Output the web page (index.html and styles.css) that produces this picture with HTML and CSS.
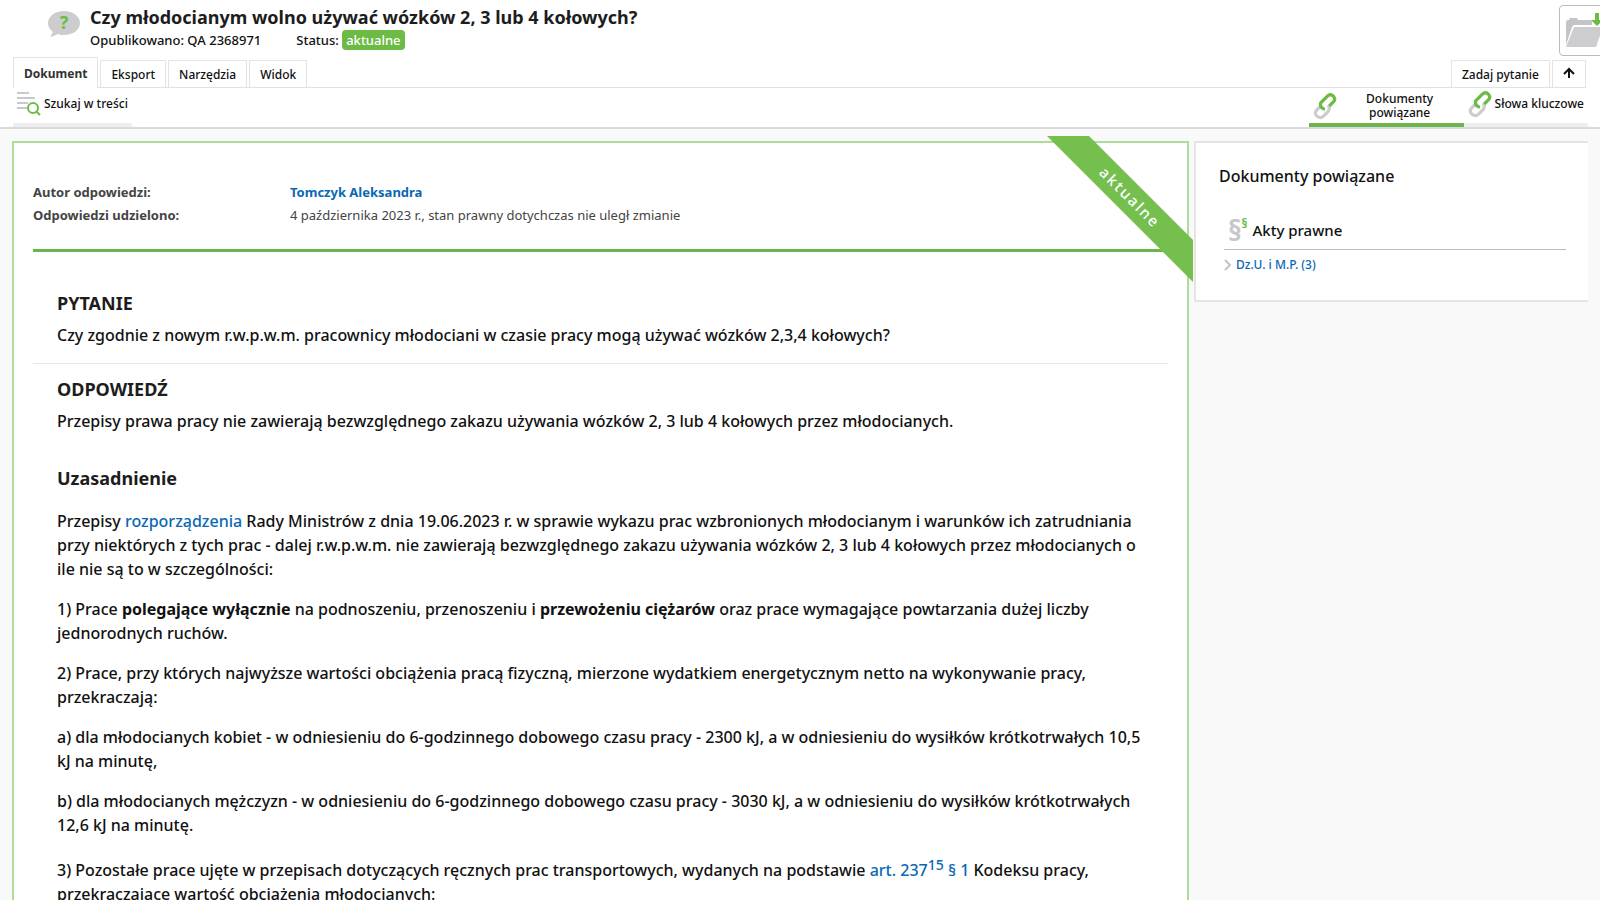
FILE: index.html
```html
<!DOCTYPE html>
<html lang="pl">
<head>
  <meta charset="utf-8">
  <title>Czy młodocianym wolno używać wózków 2, 3 lub 4 kołowych?</title>
  <link rel="stylesheet" href="styles.css">
</head>
<body>
  <!-- Nagłówek dokumentu -->
  <header class="header">
    <svg class="header-icon" width="32" height="26" viewBox="0 0 32 26">
      <path d="M16 0C7 0 0 5 0 12c0 4 2 7 5 9-1 2-2 3-3 5 4-1 6-2 8-3 2 1 4 1 6 1 9 0 16-5 16-12S25 0 16 0z" fill="#cdcdcf"/>
      <text x="16" y="18" text-anchor="middle" class="icon-mark">?</text>
    </svg>
    <div class="header-text">
      <h1>Czy młodocianym wolno używać wózków 2, 3 lub 4 kołowych?</h1>
      <p class="meta"><span>Opublikowano: QA 2368971</span><span>Status: <span class="badge">aktualne</span></span></p>
    </div>
    <button class="folder" type="button" aria-label="Dodaj do teczki">
      <svg width="48" height="40" viewBox="0 0 48 40">
        <path d="M1 33V10q0-2 2-2h1l1-2h7l1 2h12q2 0 2 2v3H10q-2 0-3 2z" fill="#c4c4c6"/>
        <path d="M9 15h29L31 35H1z" fill="#cdcdcf"/>
        <path d="M30 1h4v7h4l-6 6-6-6h4z" fill="#6cbb45"/>
      </svg>
    </button>
  </header>

  <!-- Zakładki -->
  <nav class="tabs">
    <button class="tab active" type="button">Dokument</button>
    <button class="tab" type="button">Eksport</button>
    <button class="tab" type="button">Narzędzia</button>
    <button class="tab" type="button">Widok</button>
    <button class="tab push" type="button">Zadaj pytanie</button>
    <button class="tab" type="button" aria-label="Zwiń">
      <svg width="12" height="12" viewBox="0 0 12 12"><path d="M6 11V2M1 7l5-5 5 5" fill="none" stroke="#111" stroke-width="2"/></svg>
    </button>
  </nav>

  <!-- Pasek narzędzi -->
  <div class="toolbar">
    <button class="tool" type="button">
      <svg width="24" height="25" viewBox="0 0 24 25" fill="none">
        <path d="M0 2h12M0 7h18M0 12h11M0 17h10" stroke="#c9c8cd" stroke-width="2"/>
        <circle cx="16" cy="17" r="5" fill="#fff" stroke="#6cbb45" stroke-width="2"/>
        <path d="M19 20l4 4" stroke="#6cbb45" stroke-width="2"/>
      </svg>
      <span>Szukaj w treści</span>
    </button>
    <button class="tool tool-related selected" type="button">
      <svg width="24" height="28" viewBox="0 0 22 26" fill="none" stroke-width="3">
        <path d="M7 13L3 17q-2 3 0 5 3 3 6 1l5-5q2-3 0-6" stroke="#cdcdcf"/>
        <path d="M11 16q-5-1-4-6l6-6q3-3 6 0 2 3 0 5l-4 4" stroke="#6cbb45"/>
      </svg>
      <span>Dokumenty powiązane</span>
    </button>
    <button class="tool" type="button">
      <svg width="24" height="28" viewBox="0 0 22 26" fill="none" stroke-width="3">
        <path d="M7 13L3 17q-2 3 0 5 3 3 6 1l5-5q2-3 0-6" stroke="#cdcdcf"/>
        <path d="M11 16q-5-1-4-6l6-6q3-3 6 0 2 3 0 5l-4 4" stroke="#6cbb45"/>
      </svg>
      <span>Słowa kluczowe</span>
    </button>
  </div>

  <main class="content">
    <!-- Treść dokumentu -->
    <article class="document">
      <svg class="ribbon" width="146" height="146" viewBox="0 0 146 146">
        <polygon points="0,0 42,0 146,104 146,146" fill="#74bf4e"/>
        <text class="ribbon-text" transform="translate(82 61) rotate(45)" x="1" y="5" text-anchor="middle">aktualne</text>
      </svg>
      <dl class="info">
        <dt>Autor odpowiedzi:</dt>
        <dd><a class="author" href="#">Tomczyk Aleksandra</a></dd>
        <dt>Odpowiedzi udzielono:</dt>
        <dd>4 października 2023 r., stan prawny dotychczas nie uległ zmianie</dd>
      </dl>
      <section class="question">
        <h2>PYTANIE</h2>
        <p>Czy zgodnie z nowym r.w.p.w.m. pracownicy młodociani w czasie pracy mogą używać wózków 2,3,4 kołowych?</p>
      </section>
      <section class="answer">
        <h2>ODPOWIEDŹ</h2>
        <p>Przepisy prawa pracy nie zawierają bezwzględnego zakazu używania wózków 2, 3 lub 4 kołowych przez młodocianych.</p>
        <h3>Uzasadnienie</h3>
        <p>Przepisy <a href="#">rozporządzenia</a> Rady Ministrów z dnia 19.06.2023 r. w sprawie wykazu prac wzbronionych młodocianym i warunków ich zatrudniania przy niektórych z tych prac - dalej r.w.p.w.m. nie zawierają bezwzględnego zakazu używania wózków 2, 3 lub 4 kołowych przez młodocianych o ile nie są to w szczególności:</p>
        <p>1) Prace <b>polegające wyłącznie</b> na podnoszeniu, przenoszeniu i <b>przewożeniu ciężarów</b> oraz prace wymagające powtarzania dużej liczby jednorodnych ruchów.</p>
        <p>2) Prace, przy których najwyższe wartości obciążenia pracą fizyczną, mierzone wydatkiem energetycznym netto na wykonywanie pracy, przekraczają:</p>
        <p>a) dla młodocianych kobiet - w odniesieniu do 6-godzinnego dobowego czasu pracy - 2300 kJ, a w odniesieniu do wysiłków krótkotrwałych 10,5 kJ na minutę,</p>
        <p>b) dla młodocianych mężczyzn - w odniesieniu do 6-godzinnego dobowego czasu pracy - 3030 kJ, a w odniesieniu do wysiłków krótkotrwałych 12,6 kJ na minutę.</p>
        <p>3) Pozostałe prace ujęte w przepisach dotyczących ręcznych prac transportowych, wydanych na podstawie <a href="#">art. 237<sup>15</sup> § 1</a> Kodeksu pracy, przekraczające wartość obciążenia młodocianych:</p>
      </section>
    </article>

    <!-- Dokumenty powiązane -->
    <aside class="related">
      <h2>Dokumenty powiązane</h2>
      <h3>
        <span class="paragraph-icon" aria-hidden="true">§<span class="small-sign">§</span></span>
        Akty prawne
      </h3>
      <a class="related-link" href="#">
        <svg width="8" height="12" viewBox="0 0 8 12"><path d="M1 1l5 5-5 5" fill="none" stroke="#c4c4c6" stroke-width="2"/></svg>
        Dz.U. i M.P. (3)
      </a>
    </aside>
  </main>
</body>
</html>
```
FILE: styles.css
```css
* {
  box-sizing: border-box;
}
body {
  margin: 0;
  height: 100vh;
  display: flex;
  flex-direction: column;
  overflow: hidden;
  font-family: "Noto Sans", "Open Sans", sans-serif;
  font-size: 13px;
  font-weight: 500;
  color: #111;
  background-color: #fff;
}
h1, h2, h3, p, dl, dd {
  margin: 0;
}
a {
  color: #0a68b4;
  text-decoration: none;
}
button {
  font: inherit;
  color: inherit;
  background-color: #fff;
  border: none;
  padding: 0;
}

/* Nagłówek */
.header {
  display: flex;
  flex: none;
  height: 57px;
  padding-left: 48px;
  overflow: hidden;
}
.header-icon {
  margin: 11px 10px 0 0;
}
.icon-mark {
  font-size: 18px;
  font-weight: bold;
  fill: #6cbb45;
}
.header-text {
  flex: 1;
  padding-top: 5px;
}
.header h1 {
  font-size: 18px;
  line-height: 25px;
  color: #1d1d1d;
}
.meta {
  display: flex;
  gap: 35px;
  line-height: 20px;
}
.badge {
  display: inline-block;
  padding: 0 4px;
  border-radius: 4px;
  background-color: #6cbb45;
  color: #fff;
}
.folder {
  width: 56px;
  height: 51px;
  margin: 5px -15px 0 0;
  padding: 6px 0 0 5px;
  text-align: left;
  border: 1px solid #bbb;
  border-radius: 4px;
}

/* Zakładki */
.tabs {
  display: flex;
  align-items: flex-end;
  gap: 2px;
  flex: none;
  height: 30px;
  margin: 0 14px 0 13px;
  font-size: 12px;
  box-shadow: 0 1px 0 #e2e2e2;
}
.tab {
  height: 27px;
  padding: 0 10px;
  border: 1px solid #e4e4e4;
  border-bottom: none;
}
.tab.active {
  height: 31px;
  margin-bottom: -1px;
  font-weight: bold;
  color: #333;
}
.push {
  margin-left: auto;
}

/* Pasek narzędzi */
.toolbar {
  display: flex;
  flex: none;
  height: 42px;
  padding: 1px 12px 0 13px;
  font-size: 12px;
  border-bottom: 2px solid #d9dadb;
}
.tool {
  display: flex;
  align-items: center;
  gap: 3px;
  padding: 0 4px 4px;
  line-height: 14px;
  border-bottom: 4px solid #eee;
}
.tool-related {
  width: 155px;
  margin-left: auto;
  padding-bottom: 0;
}
.tool-related span {
  flex: 1;
  padding: 0 20px;
}
.selected {
  border-bottom-color: #6cb44c;
}

/* Układ strony */
.content {
  display: grid;
  grid-template-columns: 1fr 25%;
  align-items: start;
  gap: 5px;
  flex: 1;
  min-height: 0;
  padding: 12px 12px 0;
  background-color: #f9f9fa;
}
.document {
  position: relative;
  padding: 38px 19px 20px;
  border: 2px solid #b0dc9a;
  background-color: #fff;
}
.ribbon {
  position: absolute;
  top: -7px;
  right: -6px;
}
.ribbon-text {
  font-size: 15px;
  letter-spacing: 2px;
  fill: #fff;
}
.info {
  display: grid;
  grid-template-columns: 257px 1fr;
  line-height: 23px;
  padding-bottom: 22px;
  border-bottom: 3px solid #6cb44c;
  font-weight: normal;
  color: #444;
}
.info dt,
.author {
  font-weight: bold;
}
.question {
  padding: 38px 24px 16px;
  border-bottom: 1px solid #e8e8e8;
}
.answer {
  padding: 12px 24px 0;
}
.document h2,
.document h3 {
  font-size: 18px;
  line-height: 26px;
  color: #1d1d1d;
}
.document h3 {
  margin: 32px 0 18px;
}
.document p {
  font-size: 16px;
  line-height: 24px;
}
.document h2 + p {
  margin-top: 7px;
}
.document p + p {
  margin-top: 16px;
}
.document sup {
  font-size: 14px;
}

/* Panel boczny */
.related {
  padding: 21px 22px 20px 23px;
  border: 2px solid #e4e3e5;
  border-right: none;
  background-color: #fff;
}
.related h2 {
  font-size: 16px;
  font-weight: 500;
  line-height: 24px;
}
.related h3 {
  display: flex;
  margin: 24px 0 0 5px;
  padding: 0 0 1px 4px;
  font-size: 15px;
  font-weight: 500;
  line-height: 36px;
  border-bottom: 1px solid #bbb;
}
.paragraph-icon {
  display: flex;
  margin-right: 5px;
  font-size: 28px;
  font-weight: bold;
  color: #c8c8ca;
}
.small-sign {
  font-size: 12px;
  line-height: 24px;
  color: #6cbb45;
}
.related-link {
  display: flex;
  align-items: center;
  gap: 4px;
  margin-left: 5px;
  line-height: 30px;
  font-size: 12px;
}
```
